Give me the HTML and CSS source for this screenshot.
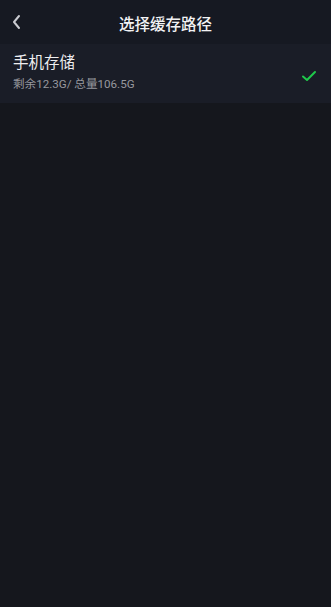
FILE: index.html
```html
<!DOCTYPE html>
<html lang="zh">
<head>
<meta charset="utf-8">
<link rel="stylesheet" href="styles.css">
</head>
<body>
<div class="page">
  <header class="header">
    <span class="back">
      <svg width="10" height="16" viewBox="0 0 10 16"><path d="M8 2 L3 8 L8 14" fill="none" stroke="#c9cad0" stroke-width="2" stroke-linecap="round" stroke-linejoin="round"/></svg>
    </span>
    <h1 class="title">选择缓存路径</h1>
  </header>
  <div class="row">
    <div class="info">
      <div class="name">手机存储</div>
      <div class="desc">剩余12.3G/ 总量106.5G</div>
    </div>
    <svg class="check" width="16" height="14" viewBox="0 0 16 14"><path d="M2 7.5 L6 11 L14 3" fill="none" stroke="#1fc94b" stroke-width="2" stroke-linecap="round" stroke-linejoin="round"/></svg>
  </div>
</div>
</body>
</html>
```
FILE: styles.css
```css
html, body { margin: 0; padding: 0; }
body {
  background: #15171d;
  font-family: "Roboto", "Noto Sans CJK SC", "Noto Sans", sans-serif;
  width: 331px;
  height: 607px;
  overflow: hidden;
}
.page { display: flex; flex-direction: column; }
.header {
  height: 44px;
  display: flex;
  align-items: center;
  justify-content: center;
  position: relative;
  background: #161922;
}
.back {
  position: absolute;
  left: 11px;
  top: 14px;
  display: flex;
}
.title {
  margin: 0;
  font-size: 15.5px;
  font-weight: 500;
  color: #f2f2f4;
  margin-top: 2px;
}
.row {
  height: 59px;
  box-sizing: border-box;
  background: #1a1d27;
  display: flex;
  align-items: center;
  padding: 0 14px 0 13px;
}
.info { flex: 1; display: flex; flex-direction: column; }
.name {
  font-size: 15.5px;
  color: #eeeef0;
  line-height: 22px;
  margin-top: -2px;
}
.desc {
  font-size: 11.6px;
  color: #97989e;
  line-height: 18px;
  margin-top: 1px;
}
.check { margin-top: 4px; }
```
